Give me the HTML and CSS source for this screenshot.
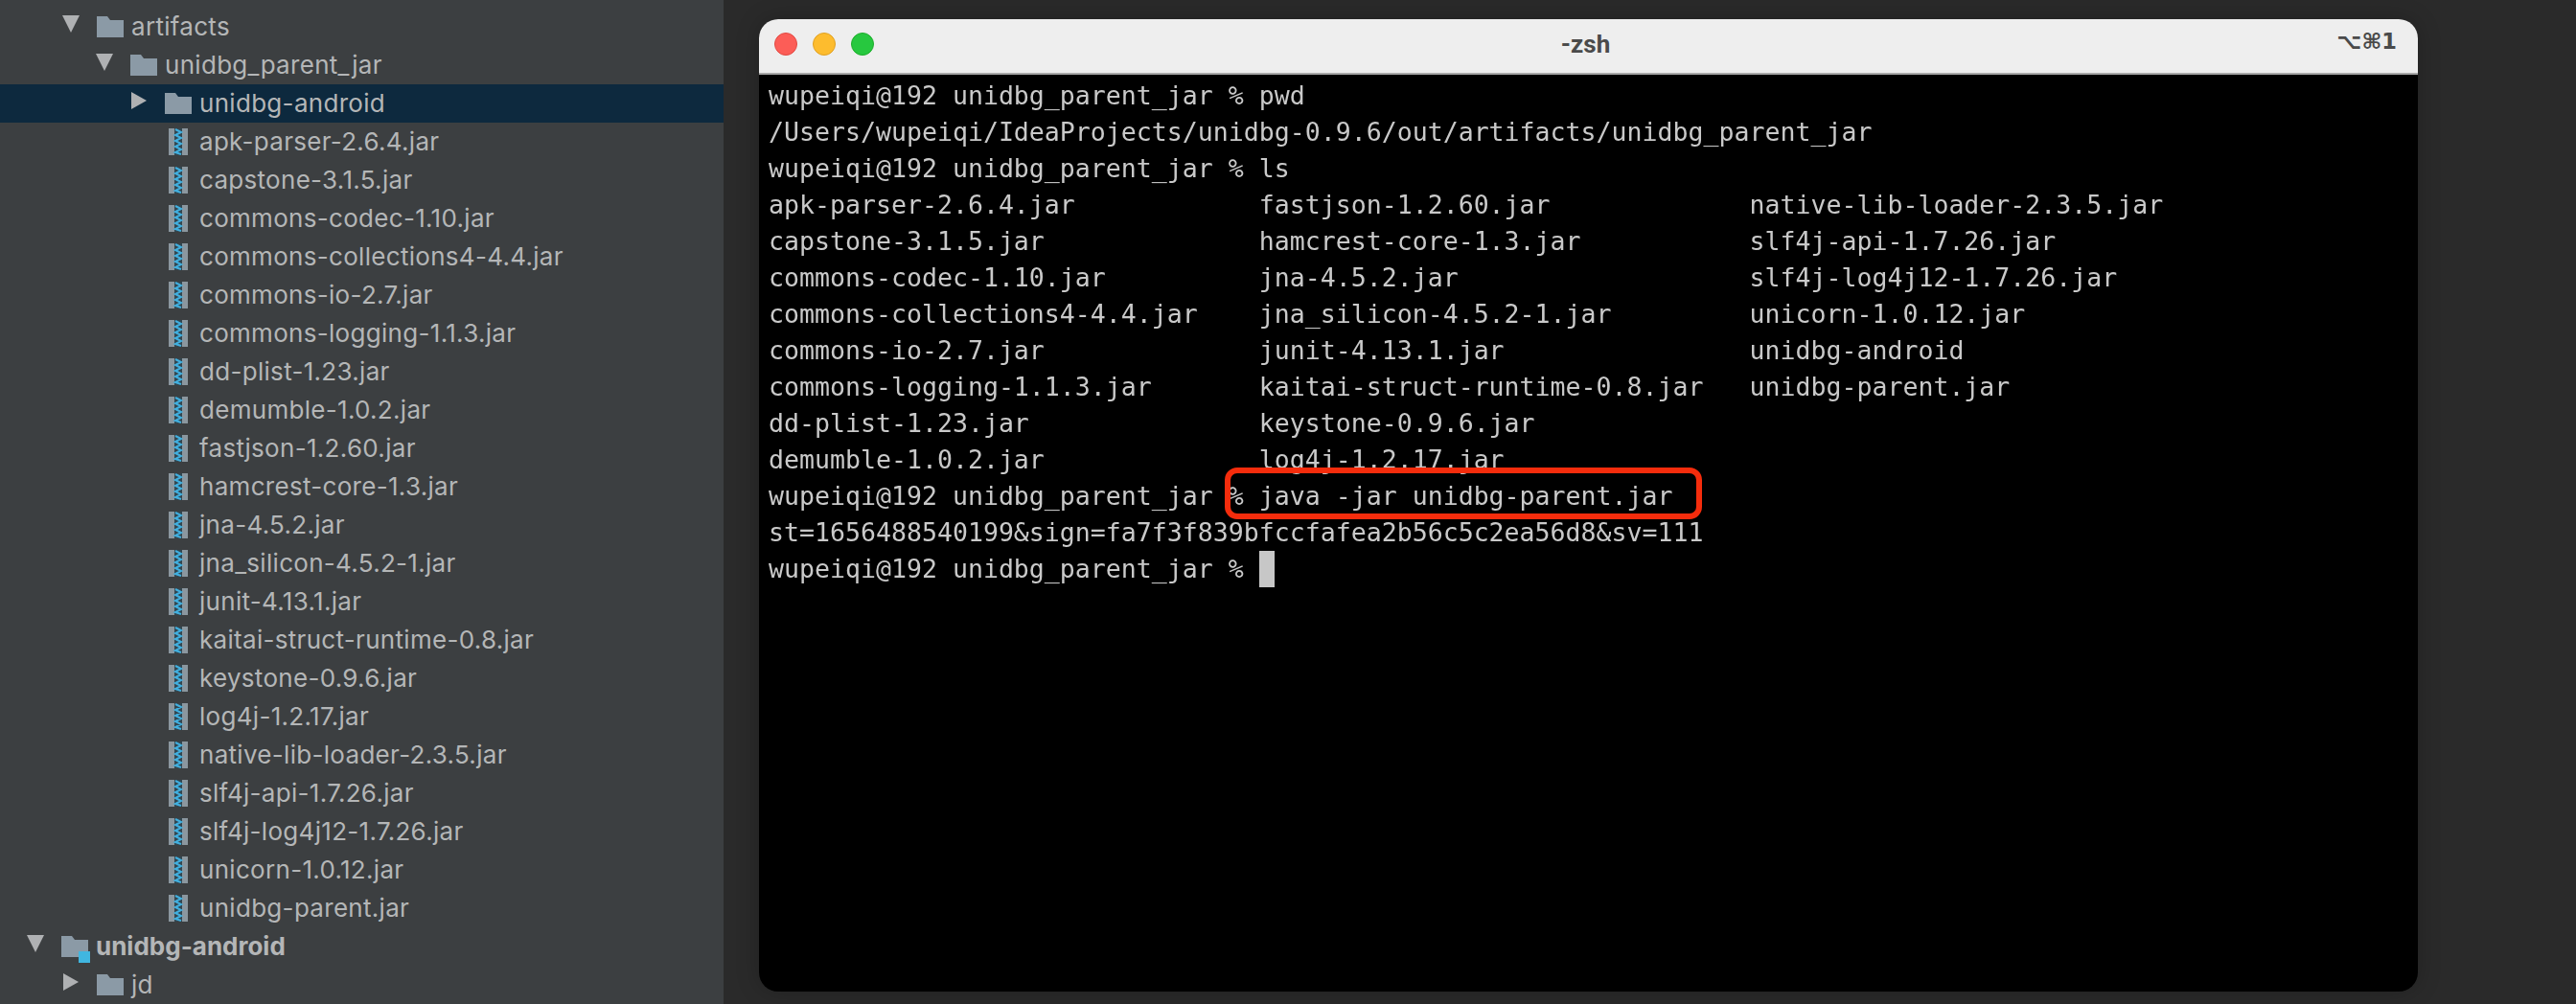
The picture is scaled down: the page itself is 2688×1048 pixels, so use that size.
FILE: index.html
```html
<!DOCTYPE html>
<html lang="en">
<head>
<meta charset="utf-8">
<title>-zsh</title>
<link rel="stylesheet" href="styles.css">
</head>
<body>
<svg class="defs" aria-hidden="true">
  <symbol id="folder" viewBox="0 0 28 22"><path d="M0 0H11L14 4H28V22H0Z"/></symbol>
  <symbol id="down" viewBox="0 0 18 18"><path d="M0 0H18L9 18Z"/></symbol>
  <symbol id="right" viewBox="0 0 16 18"><path d="M0 0L16 9L0 18Z"/></symbol>
  <symbol id="jar" viewBox="0 0 20 28">
    <path fill="#8b979f" d="M0 0H6V28H0ZM14 0H20V28H14Z"/>
    <path fill="#33464f" d="M6 0H14V28H6Z"/>
    <path fill="none" stroke="#41b0e0" stroke-width="2" d="M7 1L13 4L7 7L13 10L7 13L13 16L7 19L13 22L7 25L13 27"/>
  </symbol>
</svg>
<div class="screen">
  <aside class="sidebar">
    <ul class="tree">
      <li class="row lvl1"><svg class="arrow"><use href="#down"/></svg><svg class="folder"><use href="#folder"/></svg><span>artifacts</span></li>
      <li class="row lvl2"><svg class="arrow"><use href="#down"/></svg><svg class="folder"><use href="#folder"/></svg><span>unidbg_parent_jar</span></li>
      <li class="row lvl3 selected"><svg class="arrow"><use href="#right"/></svg><svg class="folder"><use href="#folder"/></svg><span>unidbg-android</span></li>
      <li class="row file"><svg class="jar"><use href="#jar"/></svg><span>apk-parser-2.6.4.jar</span></li>
      <li class="row file"><svg class="jar"><use href="#jar"/></svg><span>capstone-3.1.5.jar</span></li>
      <li class="row file"><svg class="jar"><use href="#jar"/></svg><span>commons-codec-1.10.jar</span></li>
      <li class="row file"><svg class="jar"><use href="#jar"/></svg><span>commons-collections4-4.4.jar</span></li>
      <li class="row file"><svg class="jar"><use href="#jar"/></svg><span>commons-io-2.7.jar</span></li>
      <li class="row file"><svg class="jar"><use href="#jar"/></svg><span>commons-logging-1.1.3.jar</span></li>
      <li class="row file"><svg class="jar"><use href="#jar"/></svg><span>dd-plist-1.23.jar</span></li>
      <li class="row file"><svg class="jar"><use href="#jar"/></svg><span>demumble-1.0.2.jar</span></li>
      <li class="row file"><svg class="jar"><use href="#jar"/></svg><span>fastjson-1.2.60.jar</span></li>
      <li class="row file"><svg class="jar"><use href="#jar"/></svg><span>hamcrest-core-1.3.jar</span></li>
      <li class="row file"><svg class="jar"><use href="#jar"/></svg><span>jna-4.5.2.jar</span></li>
      <li class="row file"><svg class="jar"><use href="#jar"/></svg><span>jna_silicon-4.5.2-1.jar</span></li>
      <li class="row file"><svg class="jar"><use href="#jar"/></svg><span>junit-4.13.1.jar</span></li>
      <li class="row file"><svg class="jar"><use href="#jar"/></svg><span>kaitai-struct-runtime-0.8.jar</span></li>
      <li class="row file"><svg class="jar"><use href="#jar"/></svg><span>keystone-0.9.6.jar</span></li>
      <li class="row file"><svg class="jar"><use href="#jar"/></svg><span>log4j-1.2.17.jar</span></li>
      <li class="row file"><svg class="jar"><use href="#jar"/></svg><span>native-lib-loader-2.3.5.jar</span></li>
      <li class="row file"><svg class="jar"><use href="#jar"/></svg><span>slf4j-api-1.7.26.jar</span></li>
      <li class="row file"><svg class="jar"><use href="#jar"/></svg><span>slf4j-log4j12-1.7.26.jar</span></li>
      <li class="row file"><svg class="jar"><use href="#jar"/></svg><span>unicorn-1.0.12.jar</span></li>
      <li class="row file"><svg class="jar"><use href="#jar"/></svg><span>unidbg-parent.jar</span></li>
      <li class="row lvl0 module"><svg class="arrow"><use href="#down"/></svg><span class="module-icon"><svg class="folder"><use href="#folder"/></svg><i class="module-badge"></i></span><span>unidbg-android</span></li>
      <li class="row lvl1"><svg class="arrow"><use href="#right"/></svg><svg class="folder"><use href="#folder"/></svg><span>jd</span></li>
    </ul>
  </aside>
  <main class="desk">
    <section class="window">
      <header class="titlebar">
        <div class="lights"><i class="light red"></i><i class="light yellow"></i><i class="light green"></i></div>
        <div class="title">-zsh</div>
        <div class="shortcut">⌥⌘1</div>
      </header>
      <div class="terminal">
<pre class="output">wupeiqi@192 unidbg_parent_jar % pwd
/Users/wupeiqi/IdeaProjects/unidbg-0.9.6/out/artifacts/unidbg_parent_jar
wupeiqi@192 unidbg_parent_jar % ls
apk-parser-2.6.4.jar            fastjson-1.2.60.jar             native-lib-loader-2.3.5.jar
capstone-3.1.5.jar              hamcrest-core-1.3.jar           slf4j-api-1.7.26.jar
commons-codec-1.10.jar          jna-4.5.2.jar                   slf4j-log4j12-1.7.26.jar
commons-collections4-4.4.jar    jna_silicon-4.5.2-1.jar         unicorn-1.0.12.jar
commons-io-2.7.jar              junit-4.13.1.jar                unidbg-android
commons-logging-1.1.3.jar       kaitai-struct-runtime-0.8.jar   unidbg-parent.jar
dd-plist-1.23.jar               keystone-0.9.6.jar
demumble-1.0.2.jar              log4j-1.2.17.jar
wupeiqi@192 unidbg_parent_jar % java -jar unidbg-parent.jar
st=1656488540199&amp;sign=fa7f3f839bfccfafea2b56c5c2ea56d8&amp;sv=111
wupeiqi@192 unidbg_parent_jar % <span class="cursor"> </span></pre>
        <div class="highlight"></div>
      </div>
    </section>
  </main>
</div>
</body>
</html>
```
FILE: styles.css
```css
* { box-sizing: border-box; }
html, body { margin: 0; height: 100%; }
body { background: #2a2a2a; overflow: hidden; }
.defs { display: none; }

.screen { display: flex; width: 2688px; height: 1048px; filter: blur(.5px); }

.sidebar { width: 755px; flex: none; background: #3c3f41; padding-top: 8px; overflow: hidden; }
.tree { list-style: none; margin: 0; padding: 0; }
.row {
  display: flex; align-items: center; height: 40px;
  font: 400 26px/40px Inter, "Liberation Sans", sans-serif;
  letter-spacing: .3px;
  color: #b4b6b7;
  white-space: nowrap;
}
.row svg { display: block; flex: none; }
.lvl0 { padding-left: 28px; }
.lvl1 { padding-left: 65px; }
.lvl2 { padding-left: 100px; }
.lvl3 { padding-left: 136px; }
.file { padding-left: 176px; }
.selected { background: #0d293e; }
.module { font-weight: 700; letter-spacing: 0; }

.arrow { width: 18px; height: 18px; margin-right: 18px; fill: #afb1b3; margin-top: -6px; }
.folder { width: 28px; height: 22px; margin-right: 8px; fill: #8b9aa6; }
.jar { width: 20px; height: 28px; margin-right: 12px; }
.module-icon { position: relative; display: block; flex: none; }
.module-badge {
  position: absolute; left: 18px; top: 16px;
  width: 12px; height: 12px; background: #40b6e0;
}

.desk { flex: 1; padding: 20px 165px 13px 37px; display: flex; }
.window {
  flex: 1; display: flex; flex-direction: column;
  border-radius: 20px; overflow: hidden;
  background: #000;
  box-shadow: 0 0 24px rgba(0, 0, 0, .22);
}
.titlebar {
  height: 58px; flex: none;
  display: grid; grid-template-columns: 1fr auto 1fr; align-items: center;
  background: #eeeeee; border-bottom: 2px solid #a8a8a8;
  padding: 0 22px 4px 16px;
}
.lights { display: flex; gap: 16px; }
.light { display: block; width: 24px; height: 24px; border-radius: 50%; }
.red { background: #fc5d57; border: 1px solid #e14942; }
.yellow { background: #fdbc2e; border: 1px solid #dfa023; }
.green { background: #27c83f; border: 1px solid #1dad2b; }
.title { font: 700 26px/1 Roboto, "Liberation Sans", sans-serif; color: #4a4a4a; }
.shortcut {
  justify-self: end; margin-top: -6px;
  font: 700 22.5px/1 "DejaVu Sans", sans-serif; color: #4a4a4a;
}

.terminal { position: relative; flex: 1; padding: 3px 0 0 10px; }
.output {
  margin: 0;
  font: 400 26.578px/38px "DejaVu Sans Mono", monospace;
  color: #c9c9c9;
}
.cursor { display: inline-block; width: 16px; height: 38px; background: #c7c7c7; vertical-align: top; }
.highlight {
  position: absolute; left: 486px; top: 410px; width: 498px; height: 54px;
  border: 6px solid #f52c0c; border-radius: 13px;
}
```
